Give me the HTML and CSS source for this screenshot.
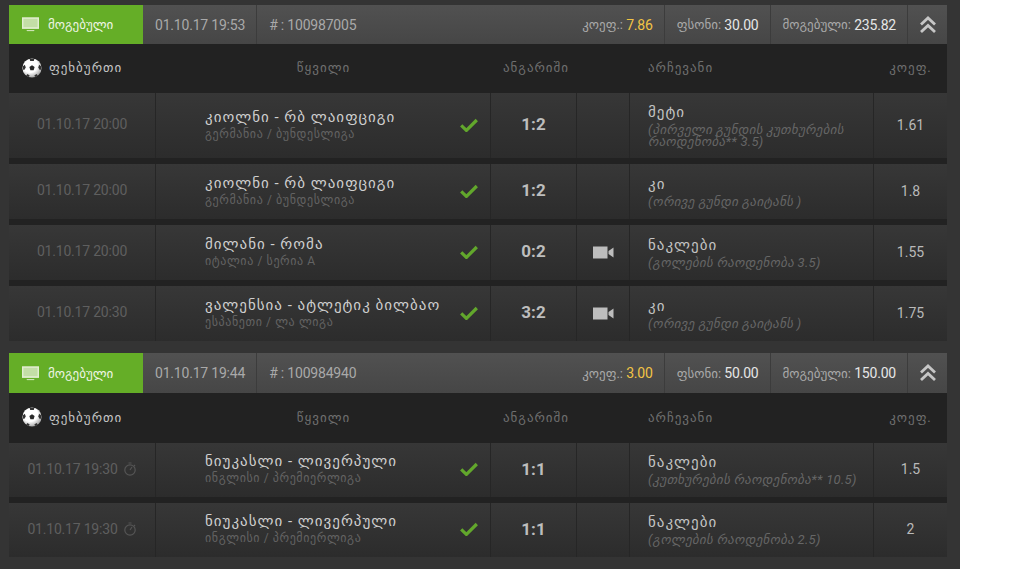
FILE: index.html
```html
<!DOCTYPE html>
<html lang="ka">
<head>
    <meta charset="UTF-8">
    <title>კუპონები</title>
    <link rel="stylesheet" href="styles.css">
</head>
<body>
<svg class="defs" width="0" height="0">
    <defs>
        <radialGradient id="ball-shade" cx="40%" cy="35%" r="70%">
            <stop offset="0.55" stop-color="#fff"/>
            <stop offset="1" stop-color="#9a9a9a"/>
        </radialGradient>
    </defs>
    <symbol id="i-monitor" viewBox="0 0 18 15">
        <path d="M0 0h18v12H0z" fill-opacity="0.75"/>
        <path d="M0 0h18v12H0z M1.5 1.5v9h15v-9z" fill-rule="evenodd"/>
        <path d="M5 13.5h8v1H5z"/>
    </symbol>
    <symbol id="i-ball" viewBox="0 0 20 20">
        <circle cx="10" cy="10" r="9.6" fill="url(#ball-shade)"/>
        <path d="M10 7.2l2.6 1.9-1 3.1H8.4l-1-3.1z" fill="#2a2a2a"/>
        <path d="M7.6 0.8h4.8l-.6 2.2H8.2z M0.8 8.4l2-1.6 1 2.6-1.6 2.6-1.2-.4z M19.2 8.4l-2-1.6-1 2.6 1.6 2.6 1.2-.4z M5.6 16l-1.4 1.4 2.4 1.6 1.2-1.2z M14.4 16l1.4 1.4-2.4 1.6-1.2-1.2z" fill="#333"/>
    </symbol>
    <symbol id="i-check" viewBox="0 0 18 14">
        <path d="M1.2 7.4l5.2 5 10.4-10.4" fill="none" stroke="#62a72c" stroke-width="3.2"/>
    </symbol>
    <symbol id="i-video" viewBox="0 0 21 13">
        <path d="M0 0.5h14.5v12H0z"/>
        <path d="M15.5 5l5-3.5v10l-5-3.5z"/>
    </symbol>
    <symbol id="i-up" viewBox="0 0 18 18">
        <path d="M2 8.5l7-6.5 7 6.5M2 16l7-6.5 7 6.5" fill="none" stroke="#c6c6c6" stroke-width="2.8"/>
    </symbol>
    <symbol id="i-timer" viewBox="0 0 14 14">
        <circle cx="7" cy="8" r="5.2" fill="none" stroke="#555" stroke-width="1.2"/>
        <path d="M5.5 1h3M7 8l2-3M11 3l1 1" fill="none" stroke="#555" stroke-width="1.2"/>
    </symbol>
</svg>

<div class="page">

    <section class="ticket">
        <header class="ticket-head">
            <div class="status"><svg class="icon-monitor"><use href="#i-monitor"/></svg>მოგებული</div>
            <div class="head-cell">01.10.17 19:53</div>
            <div class="head-cell head-id"># : 100987005</div>
            <div class="head-cell head-value">კოეფ.: <span class="yellow">7.86</span></div>
            <div class="head-cell head-value">ფსონი: <span class="white">30.00</span></div>
            <div class="head-cell head-value">მოგებული: <span class="white">235.82</span></div>
            <div class="head-toggle"><svg class="icon-up"><use href="#i-up"/></svg></div>
        </header>
        <div class="col-head">
            <div class="sport"><svg class="icon-ball"><use href="#i-ball"/></svg>ფეხბურთი</div>
            <div class="col-title col-pair">წყვილი</div>
            <div class="col-title col-score">ანგარიში</div>
            <div class="col-title col-pick">არჩევანი</div>
            <div class="col-title col-odds">კოეფ.</div>
        </div>

        <div class="row row-tall">
            <div class="cell date">01.10.17 20:00</div>
            <div class="cell match">
                <div class="teams">კიოლნი - რბ ლაიფციგი</div>
                <div class="league">გერმანია / ბუნდესლიგა</div>
                <svg class="icon-check"><use href="#i-check"/></svg>
            </div>
            <div class="cell score">1:2</div>
            <div class="cell video"></div>
            <div class="cell pick">
                <div class="pick-name">მეტი</div>
                <div class="pick-note">(პირველი გუნდის კუთხურების რაოდენობა** 3.5)</div>
            </div>
            <div class="cell odds">1.61</div>
        </div>
        <div class="row">
            <div class="cell date">01.10.17 20:00</div>
            <div class="cell match">
                <div class="teams">კიოლნი - რბ ლაიფციგი</div>
                <div class="league">გერმანია / ბუნდესლიგა</div>
                <svg class="icon-check"><use href="#i-check"/></svg>
            </div>
            <div class="cell score">1:2</div>
            <div class="cell video"></div>
            <div class="cell pick">
                <div class="pick-name">კი</div>
                <div class="pick-note">(ორივე გუნდი გაიტანს )</div>
            </div>
            <div class="cell odds">1.8</div>
        </div>
        <div class="row">
            <div class="cell date">01.10.17 20:00</div>
            <div class="cell match">
                <div class="teams">მილანი - რომა</div>
                <div class="league">იტალია / სერია A</div>
                <svg class="icon-check"><use href="#i-check"/></svg>
            </div>
            <div class="cell score">0:2</div>
            <div class="cell video"><svg class="icon-video"><use href="#i-video"/></svg></div>
            <div class="cell pick">
                <div class="pick-name">ნაკლები</div>
                <div class="pick-note">(გოლების რაოდენობა 3.5)</div>
            </div>
            <div class="cell odds">1.55</div>
        </div>
        <div class="row">
            <div class="cell date">01.10.17 20:30</div>
            <div class="cell match">
                <div class="teams">ვალენსია - ატლეტიკ ბილბაო</div>
                <div class="league">ესპანეთი / ლა ლიგა</div>
                <svg class="icon-check"><use href="#i-check"/></svg>
            </div>
            <div class="cell score">3:2</div>
            <div class="cell video"><svg class="icon-video"><use href="#i-video"/></svg></div>
            <div class="cell pick">
                <div class="pick-name">კი</div>
                <div class="pick-note">(ორივე გუნდი გაიტანს )</div>
            </div>
            <div class="cell odds">1.75</div>
        </div>
    </section>

    <section class="ticket ticket-two">
        <header class="ticket-head">
            <div class="status"><svg class="icon-monitor"><use href="#i-monitor"/></svg>მოგებული</div>
            <div class="head-cell">01.10.17 19:44</div>
            <div class="head-cell head-id"># : 100984940</div>
            <div class="head-cell head-value">კოეფ.: <span class="yellow">3.00</span></div>
            <div class="head-cell head-value">ფსონი: <span class="white">50.00</span></div>
            <div class="head-cell head-value">მოგებული: <span class="white">150.00</span></div>
            <div class="head-toggle"><svg class="icon-up"><use href="#i-up"/></svg></div>
        </header>
        <div class="col-head">
            <div class="sport"><svg class="icon-ball"><use href="#i-ball"/></svg>ფეხბურთი</div>
            <div class="col-title col-pair">წყვილი</div>
            <div class="col-title col-score">ანგარიში</div>
            <div class="col-title col-pick">არჩევანი</div>
            <div class="col-title col-odds">კოეფ.</div>
        </div>

        <div class="row">
            <div class="cell date date-timer">01.10.17 19:30<svg class="icon-timer"><use href="#i-timer"/></svg></div>
            <div class="cell match">
                <div class="teams">ნიუკასლი - ლივერპული</div>
                <div class="league">ინგლისი / პრემიერლიგა</div>
                <svg class="icon-check"><use href="#i-check"/></svg>
            </div>
            <div class="cell score">1:1</div>
            <div class="cell video"></div>
            <div class="cell pick">
                <div class="pick-name">ნაკლები</div>
                <div class="pick-note">(კუთხურების რაოდენობა** 10.5)</div>
            </div>
            <div class="cell odds">1.5</div>
        </div>
        <div class="row">
            <div class="cell date date-timer">01.10.17 19:30<svg class="icon-timer"><use href="#i-timer"/></svg></div>
            <div class="cell match">
                <div class="teams">ნიუკასლი - ლივერპული</div>
                <div class="league">ინგლისი / პრემიერლიგა</div>
                <svg class="icon-check"><use href="#i-check"/></svg>
            </div>
            <div class="cell score">1:1</div>
            <div class="cell video"></div>
            <div class="cell pick">
                <div class="pick-name">ნაკლები</div>
                <div class="pick-note">(გოლების რაოდენობა 2.5)</div>
            </div>
            <div class="cell odds">2</div>
        </div>
    </section>

</div>
</body>
</html>
```

FILE: styles.css
```css
html, body {
    margin: 0;
    padding: 0;
    background-color: #fff;
    font-family: Roboto, "DejaVu Sans", sans-serif;
    overflow: hidden;
}
.defs {
    position: absolute;
}
.page {
    width: 960px;
    height: 569px;
    box-sizing: border-box;
    padding: 5px 13px 0 9px;
    background-color: #343434;
}

/* one ticket */
.ticket {
    background-color: #222;
    margin-bottom: 12px;
}
.ticket-head {
    display: flex;
    height: 39px;
    background: linear-gradient(#515151, #464646);
    color: #a9a9a9;
    font-size: 14px;
    letter-spacing: -0.2px;
}
.status {
    width: 134px;
    display: flex;
    align-items: center;
    background-color: #65ae27;
    color: #eef5e4;
    font-size: 13px;
    letter-spacing: 0;
}
.icon-monitor {
    width: 17px;
    height: 15px;
    margin: 0 9px 0 13px;
    fill: #e3eed2;
}
.head-cell {
    display: flex;
    align-items: center;
    padding: 0 11px 0 12px;
    border-right: 1px solid #3c3c3c;
    white-space: pre;
}
.head-id {
    flex: 1;
    border-right: 0;
}
.head-value {
    font-size: 13px;
    letter-spacing: 0;
}
.head-value span {
    font-size: 14px;
    letter-spacing: -0.2px;
}
.yellow {
    color: #f2c445;
}
.white {
    color: #e6e6e6;
}
.head-toggle {
    width: 39px;
    display: flex;
    align-items: center;
    justify-content: center;
}
.icon-up {
    width: 18px;
    height: 18px;
}

/* column titles */
.col-head {
    display: grid;
    grid-template-columns: 147px 335px 86px 53px 244px 73px;
    height: 49px;
    padding-bottom: 2px;
    box-sizing: border-box;
    align-items: center;
    background-color: #222;
    color: #6f6f6f;
    font-size: 13px;
    letter-spacing: 1px;
}
.ticket-two .ticket-head {
    height: 40px;
}
.ticket-two .col-head {
    height: 50px;
}
.ticket-two .row {
    height: 54px;
}
.sport {
    display: flex;
    align-items: center;
    color: #c4c4c4;
}
.icon-ball {
    width: 20px;
    height: 20px;
    margin: 0 7px 0 13px;
}
.col-pair {
    text-align: center;
}
.col-score {
    text-align: center;
    grid-column: 3;
    padding-left: 4px;
}
.col-pick {
    grid-column: 5;
    padding-left: 18px;
}
.col-odds {
    text-align: center;
}

/* bet rows */
.row {
    display: grid;
    grid-template-columns: 147px 335px 86px 53px 244px 73px;
    height: 55px;
    margin-bottom: 6px;
    background: linear-gradient(#373737, #2c2c2c);
}
.row:last-child {
    margin-bottom: 0;
}
.row-tall {
    height: 65px;
}
.cell {
    display: flex;
    flex-direction: column;
    justify-content: center;
    border-right: 1px solid #262626;
}
.cell:last-child {
    border-right: 0;
}
.date {
    align-items: center;
    padding-bottom: 3px;
    color: #5f5f5f;
    font-size: 14px;
    letter-spacing: -0.2px;
}
.date-timer {
    flex-direction: row;
    align-items: center;
}
.icon-timer {
    width: 14px;
    height: 14px;
    margin-left: 5px;
}
.match {
    position: relative;
    padding-left: 49px;
}
.teams {
    color: #cfcfcf;
    font-size: 15px;
    line-height: 17px;
    letter-spacing: 1px;
    white-space: nowrap;
}
.league {
    color: #636363;
    font-size: 12px;
    line-height: 17px;
    letter-spacing: 0.6px;
    white-space: nowrap;
}
.icon-check {
    position: absolute;
    right: 12px;
    top: 50%;
    width: 18px;
    height: 14px;
    margin-top: -8px;
}
.score {
    align-items: center;
    padding-bottom: 3px;
    color: #bdbdbd;
    font-size: 17px;
    font-weight: 700;
}
.video {
    align-items: center;
}
.icon-video {
    width: 21px;
    height: 13px;
    fill: #bdbdbd;
}
.pick {
    padding: 0 10px 0 18px;
}
.pick-name {
    color: #c4c4c4;
    font-size: 15px;
    line-height: 17px;
    letter-spacing: 1px;
}
.pick-note {
    margin-top: 3px;
    color: #666;
    font-size: 13px;
    line-height: 12px;
    letter-spacing: 0.3px;
    font-style: italic;
}
.odds {
    align-items: center;
    padding-bottom: 2px;
    color: #b9b9b9;
    font-size: 14px;
}
```
